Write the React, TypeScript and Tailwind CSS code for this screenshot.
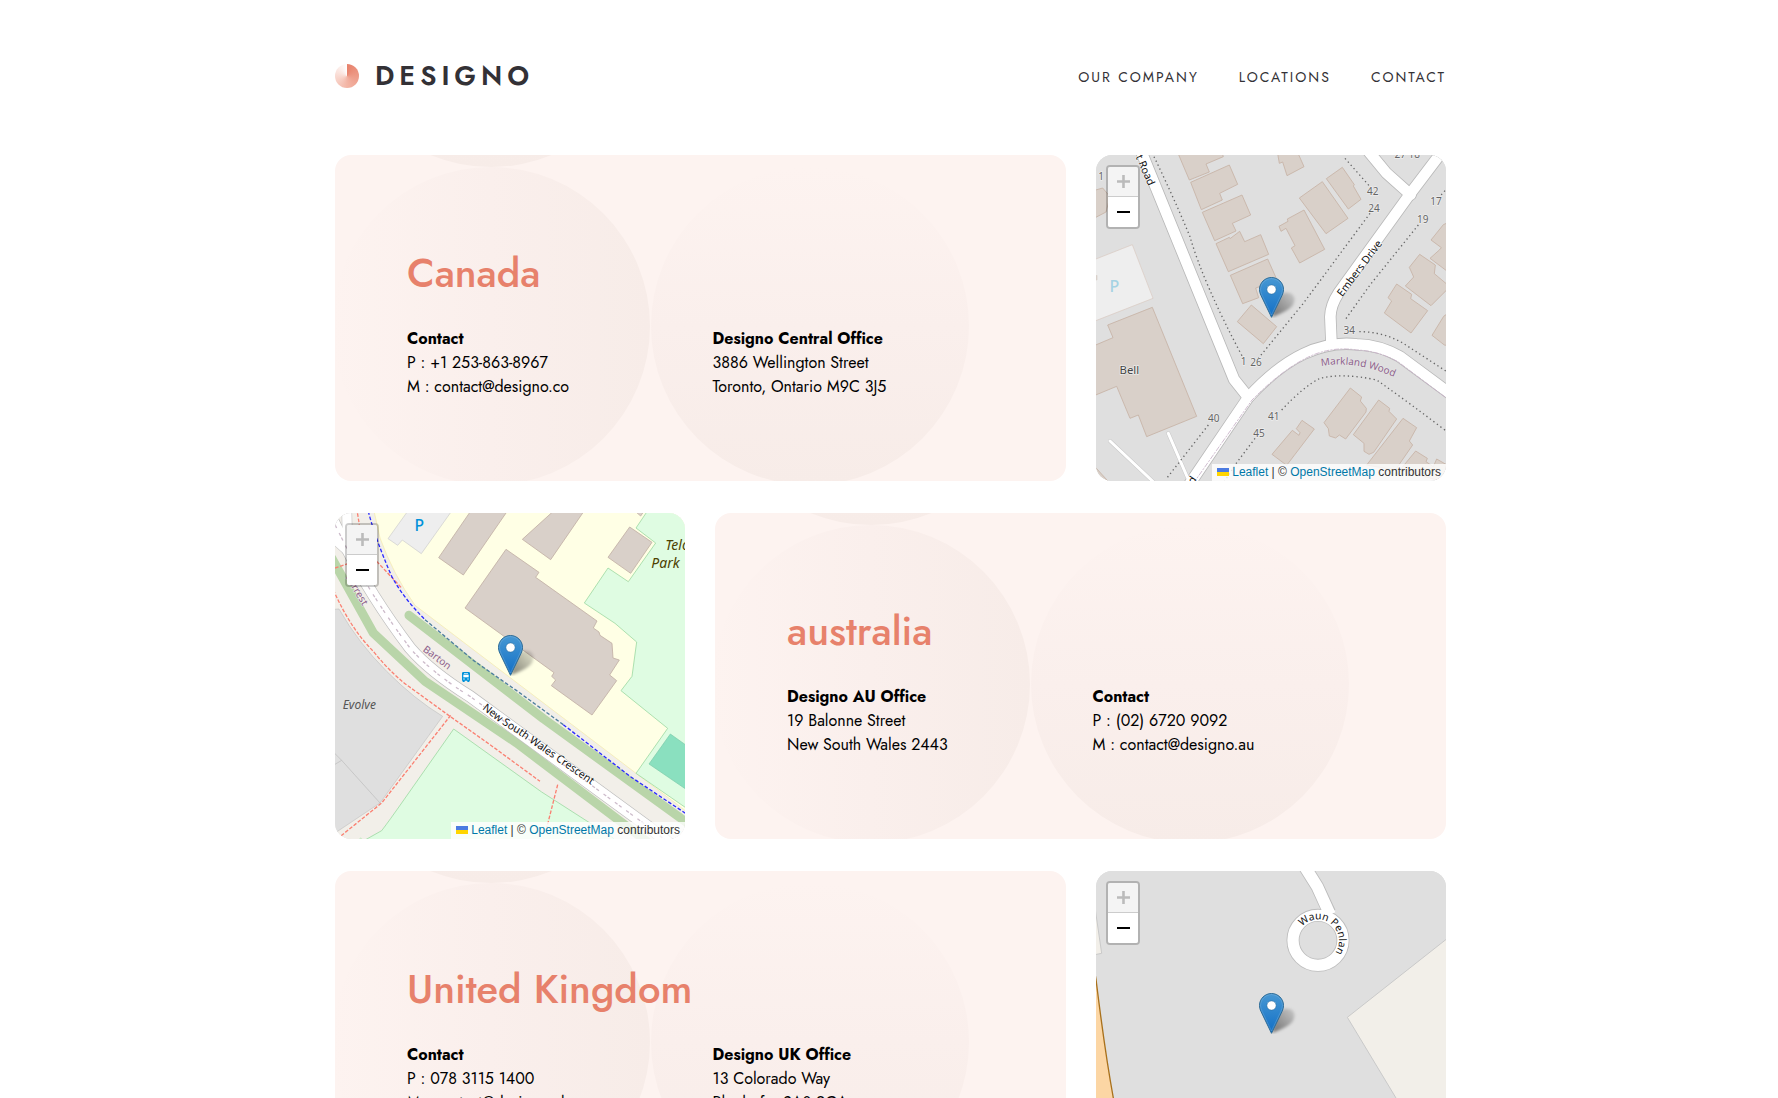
import type { ReactNode } from "react";

const mapLabel = '"Noto Sans", "Open Sans", sans-serif';

function CanadaMap() {
  const buildings = [
    "262,5 298,90 358,66 348,42 400,20 395,5",
    "302,97 418,45 443,103 389,130 397,150 334,179",
    "337,187 456,135 482,195 427,220 438,243 374,272",
    "378,281 418,262 420,266 449,244 464,275 512,254 536,313 415,365",
    "421,376 533,327 562,392 497,414 506,443 458,461",
    "484,465 560,530 520,581 442,515",
    "562,5 568,40 578,36 591,77 642,50 622,5",
    "697,95 774,205 708,251 628,144",
    "709,86 757,52 793,104 790,108 813,148 775,177",
    "642,180 704,298 629,339 604,294 615,287 588,235 573,244 567,229 594,214 592,207",
    "1080,215 1060,224 1023,270 1054,293 1048,300 1020,325 1080,370",
    "989,313 1036,345 1033,371 1070,402 1080,410 1023,467 946,408 971,381 958,352",
    "920,402 965,433 962,446 1013,482 963,549 883,489 905,453 894,443",
    "1080,485 1061,499 1026,556 1063,585 1080,588",
    "10,122 38,114 60,140 48,186 10,206",
    "187,472 320,799 170,860 145,795 120,805 80,709 10,738 10,588 69,563 53,525",
    "636,811 673,837 590,946 546,913 607,841 627,856 630,848 619,836",
    "781,714 815,741 811,753 829,775 828,786 767,867 748,855 737,864 718,858 715,836 702,818",
    "866,750 899,775 897,784 920,807 851,907 837,913 822,904 822,880 790,854",
    "939,805 980,833 958,873 968,885 916,960 830,945",
    "977,903 1012,925 1008,935 1030,950 1040,927 1080,950 1080,1000 930,960",
    "10,945 60,1000 10,1000",
  ];
  const roads = [
    "M152 0 L432 688 L475 742",
    "M280 1030 L475 742 Q560 650 640 612 T800 583 Q870 585 930 620 L1090 738",
    "M724 572 L721 500 Q722 465 745 430 L960 132 L1060 0",
    "M828 -5 L890 70 L962 134",
  ];
  const dots =
    "M192 20 Q250 140 300 260 Q340 400 460 625 M840 190 L640 460 L505 625 M765 25 L840 110 M1065 122 L1040 150 M985 225 L840 405 L765 510 M808 545 Q880 545 940 580 L1075 668 M575 780 Q640 710 690 685 Q760 668 860 690 Q960 760 1075 848 M355 825 L230 985 M495 865 L435 945 L400 1000";
  return (
    <svg viewBox="18 15 1050 978" preserveAspectRatio="xMidYMid slice" className="absolute inset-0 size-full" aria-hidden="true">
      <rect x="0" y="0" width="1100" height="1010" fill="#dfdfdf" />
      <path d="M10 330 L127 284 L189 445 L10 515 Z" fill="#eeeeee" stroke="#d9c9c0" strokeWidth="2" />
      <path d="M10 372 L22 376 L22 390 L10 395 Z" fill="#d9d0c9" />
      <g fill="#d9d0c9" stroke="#c6b2a5" strokeWidth="2.5">
        {buildings.map((p) => (
          <polygon key={p} points={p} />
        ))}
      </g>
      <g fill="none" strokeLinecap="round" strokeLinejoin="round">
        <path d="M60 873 L200 1005 M235 850 L300 1000" stroke="#c8c8c8" strokeWidth="12" />
        {roads.map((d) => (
          <path key={d} d={d} stroke="#b9b9b9" strokeWidth="37" />
        ))}
        <path d="M60 873 L200 1005 M235 850 L300 1000" stroke="#fff" strokeWidth="9" />
        {roads.map((d) => (
          <path key={d} d={d} stroke="#fff" strokeWidth="32" />
        ))}
        <path d="M310 1000 L486 750 Q570 665 645 626 T800 600 Q865 602 925 636 L1085 756" stroke="#c7b0c7" strokeWidth="2.5" strokeDasharray="14 6 4 6" />
        <path d={dots} stroke="#666" strokeWidth="4" strokeDasharray="4 9" strokeLinecap="butt" />
      </g>
      <g fontFamily={mapLabel} fontSize="30" fill="#666" stroke="#eee" strokeWidth="4" paintOrder="stroke" textAnchor="middle">
        <text x="33" y="90">1</text>
        <text x="952" y="24">27 18</text>
        <text x="848" y="135">42</text>
        <text x="852" y="185">24</text>
        <text x="1038" y="164">17</text>
        <text x="998" y="220">19</text>
        <text x="778" y="552">34</text>
        <text x="461" y="644">1</text>
        <text x="498" y="647">26</text>
        <text x="371" y="815">40</text>
        <text x="551" y="809">41</text>
        <text x="507" y="860">45</text>
        <text x="118" y="672" fontSize="34" fill="#444">Bell</text>
      </g>
      <text x="73" y="425" fontFamily={mapLabel} fontSize="48" fontWeight="500" fill="#a5d3e3" textAnchor="middle">P</text>
      <defs>
        <path id="embers" d="M757 442 L892 262 L942 190" />
        <path id="markland" d="M694 648 Q800 630 920 684" />
        <path id="westroad" d="M128 0 L210 190" />
      </defs>
      <g fontFamily={mapLabel} fontSize="32" fill="#111" stroke="#fff" strokeWidth="3" paintOrder="stroke">
        <text><textPath href="#embers">Embers Drive</textPath></text>
        <text><textPath href="#westroad" startOffset="22">t Road</textPath></text>
        <text x="303" y="1015" transform="rotate(-56 303 1015)">rd</text>
      </g>
      <text fontFamily={mapLabel} fontSize="30" fill="#8d618b" stroke="#e8e8e8" strokeWidth="3" paintOrder="stroke">
        <textPath href="#markland">Markland Wood</textPath>
      </text>
    </svg>
  );
}

function AustraliaMap() {
  const road = "M-10 0 L45 110 Q120 260 240 420 Q300 490 420 565 L960 960 L1060 1040";
  const buildings = [
    "425,5 326,149 400,201 535,5",
    "675,5 577,94 662,155 765,5",
    "910,5 932,24 945,5",
    "899,57 966,103 902,196 834,148",
    "528,124 627,193 617,208 801,339 790,360 807,372 810,382 846,406 849,450 868,456 839,501 860,518 786,621 664,533 677,516 665,505 672,494 405,300",
  ];
  return (
    <svg viewBox="15 15 1050 978" preserveAspectRatio="xMidYMid slice" className="absolute inset-0 size-full" aria-hidden="true">
      <rect x="0" y="0" width="1100" height="1010" fill="#f2efe9" />
      <path d="M130 0 L150 90 Q190 200 255 292 L1075 915 L1075 0 Z" fill="#ffffe5" stroke="#f5eaa8" strokeWidth="2" />
      <g fill="#dffce2" stroke="#9fdaa4" strokeWidth="2.5">
        <path d="M955 5 L918 60 L977 105 L895 221 L834 180 L763 285 L855 346 L920 402 L906 505 L873 548 L1013 661 L918 796 L1080 908 L1080 5 Z" />
        <path d="M371 663 L635 852 L850 990 L850 1010 L80 1010 L155 968 Q180 935 215 885 Z" />
      </g>
      <path d="M75 1005 L92 988 L110 1005 Z" fill="#cdebc8" />
      <path d="M0 305 L27 303 Q85 405 170 490 T338 625 L150 885 L0 985 Z" fill="#dfdfdf" stroke="#c3c3c3" strokeWidth="2" />
      <path d="M10 732 L35 757 L10 772 M35 757 L150 885" stroke="#bbb" strokeWidth="2" fill="none" />
      <path d="M1021 678 L1080 720 L1080 852 L957 768 Z" fill="#8ae0bf" stroke="#78c9a8" strokeWidth="2" />
      <path d="M240 0 L174 92 L203 112 L217 96 L274 137 L368 5 Z" fill="#eeeeee" stroke="#ccc" strokeWidth="2" />
      <g fill="#d9d0c9" stroke="#c2b0a5" strokeWidth="2.5">
        {buildings.map((p) => (
          <polygon key={p} points={p} />
        ))}
      </g>
      <g fill="none" strokeLinejoin="round" strokeLinecap="round">
        <path d="M237 322 L640 632 L1090 958" stroke="#b9d5a9" strokeWidth="27" />
        <path d="M5 150 L55 240 L130 375 L285 520 L560 705 L950 1000" stroke="#b9d5a9" strokeWidth="27" />
        <path d="M10 90 L55 130 M50 0 L52 80" stroke="#c9c9c9" strokeWidth="32" />
        <path d={road} stroke="#bdbdbd" strokeWidth="37" />
        <path d="M10 90 L55 130 M50 0 L52 80" stroke="#fff" strokeWidth="28" />
        <path d={road} stroke="#fff" strokeWidth="33" />
        <path d={road} stroke="#cdbccb" strokeWidth="4" strokeDasharray="10 5 10 17" strokeLinecap="butt" />
        <g stroke="#fa8072" strokeWidth="4" strokeDasharray="11 5" strokeLinecap="butt">
          <path d="M10 245 Q60 360 130 430 Q190 505 250 545 L360 625 L480 710 L630 820" />
          <path d="M362 622 L155 885 L25 990 M683 830 L650 960 M80 0 L88 50 M140 160 L215 240 M15 180 L60 165" />
        </g>
        <path d="M115 10 Q135 90 185 205 Q220 270 285 335" stroke="#2b2bff" strokeWidth="4" strokeDasharray="11 6" strokeLinecap="butt" />
        <path d="M285 335 L430 457 L560 548 L700 650" stroke="#4e7f9e" strokeWidth="4" strokeDasharray="11 6" strokeLinecap="butt" />
        <path d="M700 650 L900 805 L1080 925" stroke="#2b2bff" strokeWidth="4" strokeDasharray="11 6" strokeLinecap="butt" />
      </g>
      <g transform="translate(396 492)">
        <path d="M4 0 H20 Q24 0 24 4 V26 H0 V4 Q0 0 4 0 Z M2 25 H8 V30 H2 Z M16 25 H22 V30 H16 Z" fill="#0092da" />
        <rect x="4" y="8" width="16" height="8" fill="#fff" />
        <circle cx="6" cy="21" r="2" fill="#fff" />
        <circle cx="18" cy="21" r="2" fill="#fff" />
        <rect x="6" y="3" width="12" height="2" fill="#fff" />
      </g>
      <text x="268" y="68" fontFamily={mapLabel} fontSize="47" fontWeight="500" fill="#0092da" textAnchor="middle">P</text>
      <g fontFamily={mapLabel} fontStyle="italic" fill="#4d4100">
        <text x="1006" y="125" fontSize="42">Telopea</text>
        <text x="964" y="180" fontSize="42">Park</text>
        <text x="38" y="602" fontSize="36" fill="#555">Evolve</text>
      </g>
      <defs>
        <path id="nswcrescent" d="M456 602 Q500 640 560 676 L880 898" />
        <path id="barton" d="M277 428 L380 505" />
        <path id="forrest" d="M46 208 L116 325" />
      </defs>
      <text fontFamily={mapLabel} fontSize="32" fill="#111" stroke="#fff" strokeWidth="3" paintOrder="stroke">
        <textPath href="#nswcrescent">New South Wales Crescent</textPath>
      </text>
      <g fontFamily={mapLabel} fontSize="30" fill="#8d618b" stroke="#f2efe9" strokeWidth="3" paintOrder="stroke">
        <text><textPath href="#barton">Barton</textPath></text>
        <text><textPath href="#forrest">Forrest</textPath></text>
      </g>
    </svg>
  );
}

function KingdomMap() {
  return (
    <svg viewBox="18 15 1050 978" preserveAspectRatio="xMidYMid slice" className="absolute inset-0 size-full" aria-hidden="true">
      <rect x="0" y="0" width="1100" height="1010" fill="#dfdfdf" />
      <path d="M10 90 L35 262 L10 267 Z M772 454 L1080 211 L1080 1010 L1065 930 L918 696 Z" fill="#f2efe9" stroke="#c9c9c9" strokeWidth="3" />
      <path d="M0 240 L18 340 Q45 560 70 696 L130 1010 L0 1010 Z" fill="#fcd6a4" stroke="#a9711c" strokeWidth="4" />
      <g fill="none">
        <path d="M640 -5 L682 62 L718 140" stroke="#bdbdbd" strokeWidth="40" />
        <circle cx="684" cy="223" r="75" stroke="#bdbdbd" strokeWidth="39" />
        <path d="M640 -5 L682 62 L720 146" stroke="#fff" strokeWidth="35" />
        <circle cx="684" cy="223" r="75" stroke="#fff" strokeWidth="34" />
      </g>
      <defs>
        <path id="waunlabel" d="M636 182 A63 63 0 1 1 684 286" />
      </defs>
      <text fontFamily={mapLabel} fontSize="31" fill="#111">
        <textPath href="#waunlabel">Waun Penlan</textPath>
      </text>
    </svg>
  );
}

function Marker() {
  return (
    <svg viewBox="0 0 41 41" className="absolute left-1/2 top-1/2 -ml-3 -mt-[41px] h-[41px] w-[41px]" role="img" aria-label="Office marker">
      <defs>
        <linearGradient id="pin" x1="0" y1="0" x2="0" y2="1">
          <stop offset="0" stopColor="#4798d3" />
          <stop offset="1" stopColor="#126fc6" />
        </linearGradient>
        <linearGradient id="shade" x1="0" y1="1" x2="1" y2="0">
          <stop offset="0" stopColor="#000" stopOpacity="0.5" />
          <stop offset="1" stopColor="#000" stopOpacity="0.1" />
        </linearGradient>
        <filter id="soft" x="-30%" y="-30%" width="160%" height="160%">
          <feGaussianBlur stdDeviation="1.8" />
        </filter>
      </defs>
      <path d="M13 40 L18 20 Q24 14 31 16 Q38 19 34 28 Q30 34 13 40 Z" fill="url(#shade)" filter="url(#soft)" />
      <path d="M12.5.5C5.9.5.5 5.9.5 12.4c0 2.2.6 4.2 1.5 6.1L12.5 40.3 23 18.5c.9-1.9 1.5-3.9 1.5-6.1C24.5 5.9 19.1.5 12.5.5z" fill="url(#pin)" stroke="#2e6c97" strokeWidth="1" />
      <path d="M12.5 1.6C6.5 1.6 1.6 6.5 1.6 12.4c0 2 .5 3.9 1.4 5.7L12.5 38 22 18.1c.9-1.8 1.4-3.7 1.4-5.7C23.4 6.5 18.5 1.6 12.5 1.6z" fill="none" stroke="#fff" strokeOpacity="0.15" />
      <circle cx="12.5" cy="12.5" r="4.6" fill="#fff" stroke="#2e6c97" strokeOpacity="0.5" strokeWidth="1" />
    </svg>
  );
}

function MapCard({ children }: { children: ReactNode }) {
  return (
    <div className="relative min-h-[326px] w-full shrink-0 overflow-hidden rounded-2xl bg-[#dfdfdf] md:w-[350px]">
      {children}
      <Marker />
      <div className="absolute left-2.5 top-2.5 flex flex-col rounded border-2 border-black/20 bg-clip-padding">
        <button type="button" disabled aria-label="Zoom in" className="flex h-[30px] w-[30px] items-center justify-center rounded-t-xs border-b border-[#ccc] bg-[#f4f4f4] text-[#bbb]">
          <svg viewBox="0 0 13 13" className="size-[13px]" aria-hidden="true"><path d="M6.5 0V13M0 6.5H13" stroke="currentColor" strokeWidth="2.6" /></svg>
        </button>
        <button type="button" aria-label="Zoom out" className="flex h-[30px] w-[30px] items-center justify-center rounded-b-xs bg-white pl-px text-black">
          <svg viewBox="0 0 13 13" className="size-[13px]" aria-hidden="true"><path d="M0 6H13" stroke="currentColor" strokeWidth="2" /></svg>
        </button>
      </div>
      <div className="absolute bottom-0 right-0 whitespace-nowrap bg-white/80 px-[5px] font-['Liberation_Sans',sans-serif] text-xs leading-[17px] text-[#333]">
        <a href="#leaflet" className="text-[#0078a8]">
          <svg viewBox="0 0 12 8" className="mr-[3px] inline h-2 w-3 align-baseline" aria-hidden="true">
            <path fill="#4c7be1" d="M0 0h12v4H0z" />
            <path fill="#ffd500" d="M0 4h12v4H0z" />
          </svg>
          Leaflet
        </a>{" "}
        | © <a href="#osm" className="text-[#0078a8]">OpenStreetMap</a> contributors
      </div>
    </div>
  );
}

function Circles() {
  return (
    <svg width="731" height="326" viewBox="0 0 731 326" className="absolute left-0 top-0" aria-hidden="true">
      <defs>
        <linearGradient id="across" x1="0" x2="1" y1="0" y2="0">
          <stop offset="0" stopColor="#fdf3f0" />
          <stop offset="0.5" stopColor="#faefec" />
          <stop offset="1" stopColor="#f7ece8" />
        </linearGradient>
        <linearGradient id="down" x1="0" x2="0" y1="0" y2="1">
          <stop offset="0" stopColor="#fdf3f0" />
          <stop offset="0.5" stopColor="#faefec" />
          <stop offset="1" stopColor="#f7ece8" />
        </linearGradient>
      </defs>
      <circle cx="156" cy="-147" r="159" fill="url(#down)" />
      <circle cx="156" cy="171" r="159" fill="url(#across)" />
      <circle cx="475" cy="171" r="159" fill="url(#down)" />
    </svg>
  );
}

type Block = { heading: string; lines: string[] };

function InfoCard({ title, blocks }: { title: string; blocks: Block[] }) {
  return (
    <section className="relative min-w-0 flex-1 overflow-hidden rounded-2xl bg-[#fdf3f0] px-[72px] pb-[82px] pt-[92px]">
      <Circles />
      <h2 className="relative text-[40px] font-medium leading-[52px] text-[#e7816b]">{title}</h2>
      <div className="relative mt-7 grid grid-cols-2 gap-6 text-base leading-6 text-black">
        {blocks.map((b) => (
          <div key={b.heading} className="whitespace-nowrap">
            <h3 className="font-bold">{b.heading}</h3>
            {b.lines.map((l) => (
              <p key={l}>{l}</p>
            ))}
          </div>
        ))}
      </div>
    </section>
  );
}

function Logo() {
  return (
    <a href="#home" className="flex items-center gap-4 text-[#333136]">
      <span className="size-6 rounded-full bg-[conic-gradient(#e7816b,#f3b5a5_50%,#ffffff)]" />
      <span className="text-[27px] font-semibold leading-10 tracking-[5px]">DESIGNO</span>
    </a>
  );
}

export default function App() {
  return (
    <div className="min-h-screen bg-white pb-16 pl-[19px] pr-4 font-[Jost,Lato,sans-serif]">
      <div className="mx-auto max-w-[1111px]">
        <header className="flex items-center justify-between pb-[59px] pt-14">
          <Logo />
          <nav className="flex gap-10 pt-0.5 text-sm uppercase leading-5 tracking-[2px] text-[#333136]">
            <a href="#company">Our company</a>
            <a href="#locations">Locations</a>
            <a href="#contact">Contact</a>
          </nav>
        </header>
        <main className="flex flex-col gap-8">
          <div className="flex flex-col gap-[30px] md:flex-row">
            <InfoCard
              title="Canada"
              blocks={[
                { heading: "Contact", lines: ["P : +1 253-863-8967", "M : contact@designo.co"] },
                { heading: "Designo Central Office", lines: ["3886 Wellington Street", "Toronto, Ontario M9C 3J5"] },
              ]}
            />
            <MapCard><CanadaMap /></MapCard>
          </div>
          <div className="flex flex-col gap-[30px] md:flex-row-reverse">
            <InfoCard
              title="australia"
              blocks={[
                { heading: "Designo AU Office", lines: ["19 Balonne Street", "New South Wales 2443"] },
                { heading: "Contact", lines: ["P : (02) 6720 9092", "M : contact@designo.au"] },
              ]}
            />
            <MapCard><AustraliaMap /></MapCard>
          </div>
          <div className="flex flex-col gap-[30px] md:flex-row">
            <InfoCard
              title="United Kingdom"
              blocks={[
                { heading: "Contact", lines: ["P : 078 3115 1400", "M : contact@designo.uk"] },
                { heading: "Designo UK Office", lines: ["13 Colorado Way", "Rhyd-y-fro SA8 9GA"] },
              ]}
            />
            <MapCard><KingdomMap /></MapCard>
          </div>
        </main>
      </div>
    </div>
  );
}
